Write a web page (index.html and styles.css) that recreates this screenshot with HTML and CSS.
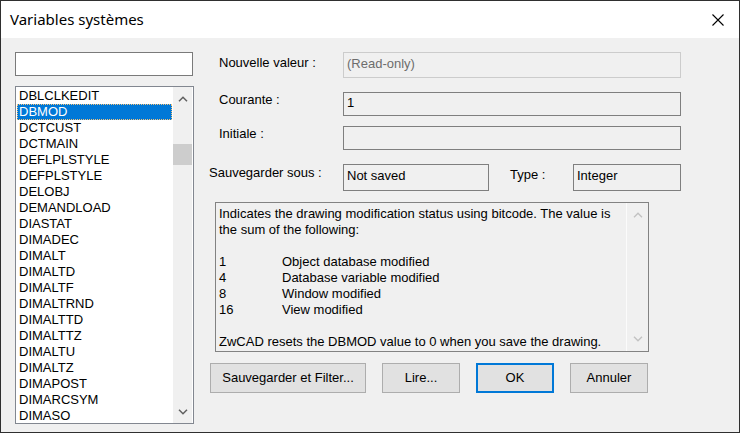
FILE: index.html
```html
<!DOCTYPE html>
<html>
<head lang="fr">
    <meta charset="UTF-8">
    <title>Variables systèmes</title>
    <link rel="stylesheet" href="styles.css">
</head>
<body>
<div class="window">
    <div class="titlebar">
        <span class="title">Variables systèmes</span>
        <svg class="close" width="12" height="12" viewBox="0 0 12 12">
            <path d="M0.5 0.5 L11.5 11.5 M11.5 0.5 L0.5 11.5" stroke="#000" stroke-width="1.1" fill="none"/>
        </svg>
    </div>
    <div class="content">
        <div class="left">
            <div class="search"></div>
            <div class="listbox">
                <ul class="items">
                    <li>DBLCLKEDIT</li>
                    <li class="selected">DBMOD</li>
                    <li>DCTCUST</li>
                    <li>DCTMAIN</li>
                    <li>DEFLPLSTYLE</li>
                    <li>DEFPLSTYLE</li>
                    <li>DELOBJ</li>
                    <li>DEMANDLOAD</li>
                    <li>DIASTAT</li>
                    <li>DIMADEC</li>
                    <li>DIMALT</li>
                    <li>DIMALTD</li>
                    <li>DIMALTF</li>
                    <li>DIMALTRND</li>
                    <li>DIMALTTD</li>
                    <li>DIMALTTZ</li>
                    <li>DIMALTU</li>
                    <li>DIMALTZ</li>
                    <li>DIMAPOST</li>
                    <li>DIMARCSYM</li>
                    <li>DIMASO</li>
                </ul>
                <div class="vscroll">
                    <div class="arrow-btn">
                        <svg width="10" height="6" viewBox="0 0 10 6"><path d="M1 5.2 L5 1.2 L9 5.2" stroke="#606060" stroke-width="1.5" fill="none"/></svg>
                    </div>
                    <div class="thumb"></div>
                    <div class="track"></div>
                    <div class="arrow-btn">
                        <svg width="10" height="6" viewBox="0 0 10 6"><path d="M1 0.8 L5 4.8 L9 0.8" stroke="#606060" stroke-width="1.5" fill="none"/></svg>
                    </div>
                </div>
            </div>
        </div>

        <div class="right">
            <div class="row row-new">
                <span class="label indent top3">Nouvelle valeur :</span>
                <div class="field readonly wide">(Read-only)</div>
            </div>
            <div class="row row-cur">
                <span class="label indent">Courante :</span>
                <div class="field wide">1</div>
            </div>
            <div class="row row-init">
                <span class="label indent">Initiale :</span>
                <div class="field wide"></div>
            </div>
            <div class="row row-save">
                <span class="label">Sauvegarder sous :</span>
                <div class="field saved">Not saved</div>
                <span class="label type-label">Type :</span>
                <div class="field type">Integer</div>
            </div>

            <div class="desc">
                <div class="desc-text">
                    <p>Indicates the drawing modification status using bitcode. The value is the sum of the following:</p>
                    <div class="flags">
                        <span>1</span><span>Object database modified</span>
                        <span>4</span><span>Database variable modified</span>
                        <span>8</span><span>Window modified</span>
                        <span>16</span><span>View modified</span>
                    </div>
                    <p>ZwCAD resets the DBMOD value to 0 when you save the drawing.</p>
                </div>
                <div class="desc-scroll">
                    <svg width="10" height="6" viewBox="0 0 10 6"><path d="M1 5.2 L5 1.2 L9 5.2" stroke="#c2c2c2" stroke-width="1.4" fill="none"/></svg>
                    <svg width="10" height="6" viewBox="0 0 10 6"><path d="M1 0.8 L5 4.8 L9 0.8" stroke="#c2c2c2" stroke-width="1.4" fill="none"/></svg>
                </div>
            </div>

            <div class="buttons">
                <a href="javascript:;" class="btn btn-long">Sauvegarder et Filter...</a>
                <a href="javascript:;" class="btn">Lire...</a>
                <a href="javascript:;" class="btn btn-default">OK</a>
                <a href="javascript:;" class="btn">Annuler</a>
            </div>
        </div>
    </div>
</div>
</body>
</html>
```

FILE: styles.css
```css
@charset "UTF-8";
/*initial reset*/
body,p,ul,li{margin:0;padding:0}
ul{list-style:none}
a{text-decoration:none;color:#000}
body{font:13px/16px "Liberation Sans", Arial, sans-serif;color:#000;background:#fff;}

.window{
    width:740px;
    height:433px;
    box-sizing:border-box;
    border:1px solid #2f2f2f;
    display:flex;
    flex-direction:column;
}
.titlebar{
    height:37px;
    background:#fff;
    display:flex;
    align-items:center;
    padding-left:9px;
    padding-right:15px;
}
.title{
    font:15px "Segoe UI", "Noto Sans", sans-serif;
    flex:1;
    margin-top:-1px;
}
.close{
    margin-top:1px;
}
.content{
    flex:1;
    background:#f0f0f0;
    display:flex;
    padding:14px 0 0 14px;
}

/* left column */
.left{
    width:179px;
    flex-shrink:0;
}
.search{
    width:178px;
    height:24px;
    box-sizing:border-box;
    border:1px solid #7a7a7a;
    background:#fff;
    margin-bottom:10px;
}
.listbox{
    height:338px;
    box-sizing:border-box;
    border:1px solid #828790;
    background:#fff;
    display:flex;
    padding:1px 1px 0 1px;
    overflow:hidden;
}
.items{
    width:156px;
}
.items li{
    height:16px;
    padding-left:2px;
    white-space:nowrap;
}
.items .selected{
    background:#0078d7;
    color:#fff;
    outline:1px dotted #f5c27a;
    outline-offset:-1px;
}
.vscroll{
    width:19px;
    margin-left:1px;
    margin-top:-1px;
    background:#f0f0f0;
    display:flex;
    flex-direction:column;
}
.arrow-btn{
    height:23px;
    display:flex;
    align-items:center;
    justify-content:center;
}
.thumb{
    height:21px;
    margin-top:34px;
    background:#cdcdcd;
}
.track{
    flex:1;
}

/* right column */
.right{
    margin-left:15px;
    width:472px;
    flex-shrink:0;
}
.row{
    display:flex;
    align-items:flex-start;
}
.row > *{
    flex-shrink:0;
}
.row-cur,.row-save{
    margin-top:14px;
}
.row-init{
    margin-top:10px;
}
.label{
    width:134px;
    white-space:nowrap;
    box-sizing:border-box;
}
.indent{
    padding-left:10px;
}
.top3{
    padding-top:3px;
}
.field{
    box-sizing:border-box;
    border:1px solid #7f7f7f;
    padding:2px 3px 0;
    height:24px;
}
.wide{
    width:338px;
}
.readonly{
    height:26px;
    border-color:#cccccc;
    color:#6d6d6d;
    padding-top:3px;
}
.saved{
    width:146px;
    height:27px;
    padding-top:3px;
}
.row-save > .label:first-child{
    padding-top:1px;
}
.type-label{
    width:63px;
    margin-left:21px;
    padding-top:3px;
}
.type{
    width:108px;
    height:27px;
    padding-top:3px;
}

.desc{
    margin-top:11px;
    margin-left:6px;
    width:434px;
    height:150px;
    box-sizing:border-box;
    border:1px solid #828282;
    display:flex;
}
.desc-text{
    flex:1;
    padding:3px 0 0 3px;
}
.desc-text p + .flags,
.flags + p{
    margin-top:16px;
}
.flags{
    display:grid;
    grid-template-columns:63px auto;
}
.desc-scroll{
    width:21px;
    border-left:1px solid #fbfbfb;
    display:flex;
    flex-direction:column;
    justify-content:space-between;
    align-items:center;
    padding:9px 0 9px;
}

.buttons{
    margin-top:11px;
    margin-left:1px;
    display:flex;
    gap:16px;
}
.btn{
    width:78px;
    height:30px;
    box-sizing:border-box;
    border:1px solid #adadad;
    background:#e1e1e1;
    display:flex;
    align-items:center;
    justify-content:center;
}
.btn-long{
    width:156px;
}
.btn-default{
    border:2px solid #0078d7;
}
```
